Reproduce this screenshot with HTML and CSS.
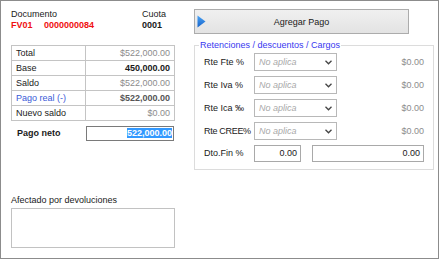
FILE: index.html
```html
<!DOCTYPE html>
<html lang="es">
<head>
    <meta charset="UTF-8">
    <title>Agregar Pago</title>
    <link rel="stylesheet" href="styles.css">
</head>
<body>
    <div class="window">
        <div class="left">
            <div class="doc-head">
                <div>
                    <div>Documento</div>
                    <div class="doc-num"><span class="prefix">FV01</span><span>0000000084</span></div>
                </div>
                <div>
                    <div>Cuota</div>
                    <div class="bold">0001</div>
                </div>
            </div>

            <table class="totals">
                <tr><td class="lbl">Total</td><td class="val muted">$522,000.00</td></tr>
                <tr><td class="lbl">Base</td><td class="val bold">450,000.00</td></tr>
                <tr><td class="lbl">Saldo</td><td class="val muted">$522,000.00</td></tr>
                <tr><td class="lbl blue">Pago real (-)</td><td class="val bold dark">$522,000.00</td></tr>
                <tr><td class="lbl">Nuevo saldo</td><td class="val muted">$0.00</td></tr>
            </table>

            <div class="neto">
                <span class="neto-lbl">Pago neto</span>
                <div class="box neto-box"><span class="sel">522,000.00</span></div>
            </div>

            <div class="dev-lbl">Afectado por devoluciones</div>
            <div class="box dev-box"></div>
        </div>

        <div class="right">
            <button class="add-btn">
                <svg class="play" width="9" height="13" viewBox="0 0 9 13">
                    <defs>
                        <linearGradient id="pg" x1="0" y1="0" x2="0" y2="1">
                            <stop offset="0" stop-color="#4aa3f5"/>
                            <stop offset="1" stop-color="#1763c9"/>
                        </linearGradient>
                    </defs>
                    <path d="M0.5 0.5 L8.5 6.5 L0.5 12.5 Z" fill="url(#pg)"/>
                </svg>
                Agregar Pago
            </button>

            <fieldset class="group">
                <legend>Retenciones / descuentos / Cargos</legend>
                <div class="row">
                    <span class="rlbl">Rte Fte %</span>
                    <div class="combo"><span>No aplica</span><svg width="7" height="5" viewBox="0 0 7 5"><path d="M0.5 0.8 L3.5 3.8 L6.5 0.8" fill="none" stroke="#444" stroke-width="1.3"/></svg></div>
                    <span class="amt">$0.00</span>
                </div>
                <div class="row">
                    <span class="rlbl">Rte Iva %</span>
                    <div class="combo"><span>No aplica</span><svg width="7" height="5" viewBox="0 0 7 5"><path d="M0.5 0.8 L3.5 3.8 L6.5 0.8" fill="none" stroke="#444" stroke-width="1.3"/></svg></div>
                    <span class="amt">$0.00</span>
                </div>
                <div class="row">
                    <span class="rlbl">Rte Ica ‰</span>
                    <div class="combo"><span>No aplica</span><svg width="7" height="5" viewBox="0 0 7 5"><path d="M0.5 0.8 L3.5 3.8 L6.5 0.8" fill="none" stroke="#444" stroke-width="1.3"/></svg></div>
                    <span class="amt">$0.00</span>
                </div>
                <div class="row">
                    <span class="rlbl cree">Rte CREE%</span>
                    <div class="combo"><span>No aplica</span><svg width="7" height="5" viewBox="0 0 7 5"><path d="M0.5 0.8 L3.5 3.8 L6.5 0.8" fill="none" stroke="#444" stroke-width="1.3"/></svg></div>
                    <span class="amt">$0.00</span>
                </div>
                <div class="row">
                    <span class="rlbl">Dto.Fin %</span>
                    <div class="box num small">0.00</div>
                    <div class="box num wide">0.00</div>
                </div>
            </fieldset>
        </div>
    </div>
</body>
</html>
```

FILE: styles.css
```css
html, body {
    margin: 0;
    padding: 0;
    background: #fff;
}
body {
    font-family: "Liberation Sans", Arial, sans-serif;
    font-size: 9px;
    line-height: 11px;
    color: #1a1a1a;
}
.window {
    width: 439px;
    height: 259px;
    box-sizing: border-box;
    border: 1px solid #8c8c8c;
    padding: 8px 0 0 10px;
    display: flex;
}
.bold { font-weight: bold; }
.muted { color: #8c8c8c; }
.dark { color: #555; }
.blue { color: #3a5ad8; }

/* left column */
.left {
    width: 164px;
}
.doc-head {
    display: grid;
    grid-template-columns: 131px auto;
}
.doc-num {
    color: #f01010;
    font-weight: bold;
}
.doc-num .prefix {
    display: inline-block;
    width: 33px;
}
.totals {
    margin-top: 14px;
    width: 164px;
    border-collapse: collapse;
    border: 1px solid #a8a8a8;
}
.totals td {
    height: 14px;
    padding: 0;
    border: 1px solid #c4c4c4;
}
.totals .lbl {
    width: 69px;
    padding-left: 4px;
}
.totals .val {
    text-align: right;
    padding-right: 4px;
}
.box {
    box-sizing: border-box;
    border: 1px solid #a9a9a9;
    background: #fff;
}
.neto {
    display: flex;
    align-items: center;
    margin-top: 5px;
}
.neto-lbl {
    width: 69px;
    padding-left: 6px;
    font-weight: bold;
}
.neto-box {
    width: 88px;
    height: 15px;
    border-color: #7a7a7a;
    text-align: right;
    padding: 1px 1px 0 0;
    line-height: 11px;
}
.sel {
    background: #3399ff;
    color: #fff;
    font-weight: bold;
}
.dev-lbl {
    margin-top: 54px;
}
.dev-box {
    margin-top: 2px;
    width: 164px;
    height: 40px;
    border-color: #c2c2c2;
}

/* right column */
.right {
    margin-left: 19px;
    width: 240px;
}
.add-btn {
    position: relative;
    width: 215px;
    height: 25px;
    border: 1px solid #acacac;
    background: linear-gradient(#f0f0f0, #e3e3e3);
    font-family: inherit;
    font-size: 9px;
    color: #1a1a1a;
    padding: 0;
    margin: 0;
    display: block;
}
.play {
    position: absolute;
    left: 2px;
    top: 5px;
}
.group {
    margin: 6px 0 0 0;
    padding: 2px 9px 7px 9px;
    border: 1px solid #dcdcdc;
    width: 240px;
    box-sizing: border-box;
    min-width: 0;
}
.group legend {
    margin-left: -5px;
    padding: 0 1px;
    color: #3838f0;
    line-height: 11px;
}
.row {
    display: flex;
    align-items: center;
    height: 18px;
    margin-bottom: 5px;
}
.row:last-child {
    margin-bottom: 0;
    height: 17px;
}
.rlbl {
    width: 50px;
    flex: none;
}
.rlbl.cree {
    letter-spacing: -0.3px;
}
.combo {
    box-sizing: border-box;
    width: 83px;
    height: 18px;
    border: 1px solid #b8b8b8;
    display: flex;
    align-items: center;
    justify-content: space-between;
    padding: 0 4px 0 4px;
    color: #a8a8a8;
    font-style: italic;
}
.amt {
    margin-left: auto;
    color: #8c8c8c;
}
.num {
    height: 17px;
    text-align: right;
    padding: 2px 3px 0 0;
}
.num.small { width: 47px; }
.num.wide { width: 112px; margin-left: 11px; }
```
